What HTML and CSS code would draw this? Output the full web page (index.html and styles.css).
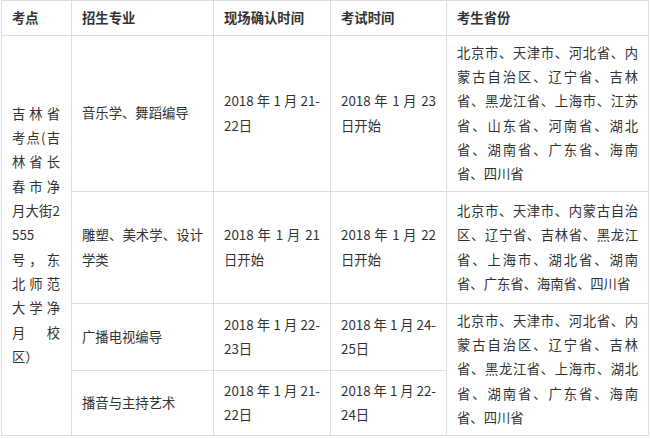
FILE: index.html
```html
<!DOCTYPE html>
<html lang="zh-CN">
<head>
<meta charset="utf-8">
<title>考点信息</title>
<link rel="stylesheet" href="styles.css">
</head>
<body>
<table class="exam">
  <colgroup>
    <col class="c1">
    <col class="c2">
    <col class="c3">
    <col class="c4">
    <col class="c5">
  </colgroup>
  <thead>
    <tr class="r-head">
      <th>考点</th>
      <th>招生专业</th>
      <th>现场确认时间</th>
      <th>考试时间</th>
      <th>考生省份</th>
    </tr>
  </thead>
  <tbody>
    <tr class="r1">
      <td rowspan="4" class="site">吉林省考点(吉林省长春市净月大街2<wbr>555号，东北师范大学净月校区）</td>
      <td>音乐学、舞蹈编导</td>
      <td>2018年1月21-22日</td>
      <td>2018 年 1 月 23 日开始</td>
      <td>北京市、天津市、河北省、内蒙古自治区、辽宁省、吉林省、黑龙江省、上海市、江苏省、山东省、河南省、湖北省、湖南省、广东省、海南省、四川省</td>
    </tr>
    <tr class="r2">
      <td>雕塑、美术学、设计学类</td>
      <td>2018 年 1 月 21 日开始</td>
      <td>2018 年 1 月 22 日开始</td>
      <td>北京市、天津市、内蒙古自治区、辽宁省、吉林省、黑龙江省、上海市、湖北省、湖南省、广东省、海南省、四川省</td>
    </tr>
    <tr class="r3">
      <td>广播电视编导</td>
      <td>2018年1月22-23日</td>
      <td>2018年1月24-25日</td>
      <td rowspan="2">北京市、天津市、河北省、内蒙古自治区、辽宁省、吉林省、黑龙江省、上海市、湖北省、湖南省、广东省、海南省、四川省</td>
    </tr>
    <tr class="r4">
      <td>播音与主持艺术</td>
      <td>2018年1月21-22日</td>
      <td>2018年1月22-24日</td>
    </tr>
  </tbody>
</table>
</body>
</html>
```

FILE: styles.css
```css
html, body {
  margin: 0;
  padding: 0;
  background: #ffffff;
}

body {
  font-family: "Noto Sans CJK SC", "Noto Sans", sans-serif;
  font-size: 13.33px;
  color: #333333;
  text-spacing-trim: space-all;
}

.exam {
  border-collapse: collapse;
  table-layout: fixed;
  width: 648px;
  margin: 0 0 0 1px;
}

.c1 { width: 70px; }
.c2 { width: 142px; }
.c3 { width: 117px; }
.c4 { width: 116px; }
.c5 { width: 202px; }

.exam th,
.exam td {
  border: 1px solid #dddddd;
  padding: 0 10px;
  line-height: 24.3px;
  vertical-align: middle;
  text-align: justify;
  word-wrap: break-word;
}

.exam th {
  font-weight: bold;
  text-align: left;
}

.exam td.site {
  padding: 0 11px 0 10px;
}

.r-head { height: 35px; }
.r1 { height: 156px; }
.r2 { height: 112px; }
.r3 { height: 67px; }
.r4 { height: 65px; }
```
